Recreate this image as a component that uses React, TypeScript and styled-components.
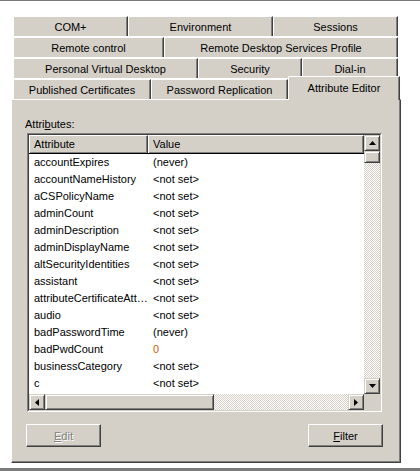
import styled, { createGlobalStyle } from "styled-components";

const GlobalStyle = createGlobalStyle`
  html, body {
    margin: 0;
    padding: 0;
    background: #fff;
  }
  body {
    font-family: "Liberation Sans", Arial, sans-serif;
    font-size: 11px;
    color: #000;
  }
`;

const Window = styled.div`
  width: 420px;
  height: 471px;
  box-sizing: border-box;
  border-top: 1px solid #7a7a7a;
  border-bottom: 3px solid #7a7a7a;
  padding: 15px 0 0 11px;
  display: flex;
  flex-direction: column;
`;

const TabStrip = styled.div`
  margin-left: 2px;
  width: 385px;
  display: flex;
  flex-direction: column;
  gap: 1px;
`;

const TabRow = styled.div`
  display: flex;
  height: 20px;
`;

const Tab = styled.div<{ $w: number; $active?: boolean }>`
  flex: 0 0 ${(p) => p.$w}px;
  box-sizing: border-box;
  height: ${(p) => (p.$active ? 24 : 20)}px;
  margin-top: ${(p) => (p.$active ? -3 : 0)}px;
  background: #d4d0c8;
  border-top: 1px solid #fff;
  border-left: 1px solid #fff;
  border-right: 1px solid #404040;
  box-shadow: inset -1px 0 #808080;
  border-top-left-radius: 2px;
  display: flex;
  align-items: center;
  justify-content: center;
  white-space: nowrap;
  position: ${(p) => (p.$active ? "relative" : "static")};
  z-index: ${(p) => (p.$active ? 1 : "auto")};
  padding-bottom: ${(p) => (p.$active ? 2 : 0)}px;
`;

const Panel = styled.div`
  width: 390px;
  height: 364px;
  box-sizing: border-box;
  background: #d4d0c8;
  border-top: 1px solid #fff;
  border-left: 1px solid #fff;
  border-right: 1px solid #404040;
  border-bottom: 1px solid #404040;
  box-shadow: inset -1px -1px #808080;
  padding: 17px 0 0 13px;
  display: flex;
  flex-direction: column;
`;

const Label = styled.div`
  height: 14px;
  line-height: 14px;
  margin-bottom: 2px;
  u {
    text-decoration: underline;
  }
`;

const ListOuter = styled.div`
  margin-left: 2px;
  width: 355px;
  height: 279px;
  box-sizing: border-box;
  border: 1px solid;
  border-color: #808080 #fff #fff #808080;
`;

const ListInner = styled.div`
  height: 100%;
  box-sizing: border-box;
  border: 1px solid;
  border-color: #404040 #d4d0c8 #d4d0c8 #404040;
  display: grid;
  grid-template-columns: 1fr 16px;
  grid-template-rows: 1fr 16px;
  background: #fff;
`;

const Content = styled.div`
  overflow: hidden;
  background: #fff;
`;

const HeaderRow = styled.div`
  display: flex;
  height: 18px;
  border-bottom: 1px solid #000;
`;

const HeaderCell = styled.div<{ $w?: number }>`
  ${(p) => (p.$w ? `flex: 0 0 ${p.$w}px;` : "flex: 1;")}
  box-sizing: border-box;
  background: #d4d0c8;
  border-top: 1px solid #fff;
  border-left: 1px solid #fff;
  border-right: 1px solid #404040;
  box-shadow: inset -1px -1px #808080;
  padding-left: 4px;
  line-height: 16px;
`;

const Row = styled.div`
  display: flex;
  height: 17px;
  line-height: 17px;
`;

const Cell = styled.div<{ $w?: number; $accent?: boolean }>`
  ${(p) => (p.$w ? `flex: 0 0 ${p.$w}px;` : "flex: 1;")}
  box-sizing: border-box;
  padding-left: 5px;
  padding-right: 0;
  white-space: nowrap;
  overflow: hidden;
  text-overflow: ellipsis;
  color: ${(p) => (p.$accent ? "#d06000" : "#000")};
`;

const ScrollBar = styled.div<{ $vertical?: boolean }>`
  display: flex;
  flex-direction: ${(p) => (p.$vertical ? "column" : "row")};
  background-color: #fff;
  background-image: repeating-conic-gradient(#d4d0c8 0 25%, #fff 0 50%);
  background-size: 2px 2px;
`;

const ScrollPart = styled.div<{ $size: number }>`
  flex: 0 0 ${(p) => p.$size}px;
  box-sizing: border-box;
  background: #d4d0c8;
  border: 1px solid;
  border-color: #d4d0c8 #404040 #404040 #d4d0c8;
  box-shadow: inset 1px 1px #fff, inset -1px -1px #808080;
  display: flex;
  align-items: center;
  justify-content: center;
`;

const Track = styled.div`
  flex: 1;
`;

const Corner = styled.div`
  background: #d4d0c8;
`;

const ButtonRow = styled.div`
  margin: 12px 0 0 1px;
  width: 357px;
  display: flex;
  justify-content: space-between;
`;

const Button = styled.div<{ $disabled?: boolean }>`
  width: 75px;
  height: 23px;
  box-sizing: border-box;
  border: 1px solid;
  border-color: #fff #404040 #404040 #fff;
  box-shadow: inset -1px -1px #808080;
  display: flex;
  align-items: center;
  justify-content: center;
  color: ${(p) => (p.$disabled ? "#808080" : "#000")};
  text-shadow: ${(p) => (p.$disabled ? "1px 1px #fff" : "none")};
  u {
    text-decoration: underline;
  }
`;

function Arrow({ dir }: { dir: "up" | "down" | "left" | "right" }) {
  const pts = {
    up: "0,4 7,4 3.5,0",
    down: "0,0 7,0 3.5,4",
    left: "4,0 4,7 0,3.5",
    right: "0,0 0,7 4,3.5",
  }[dir];
  const vertical = dir === "up" || dir === "down";
  return (
    <svg width={vertical ? 7 : 4} height={vertical ? 4 : 7} viewBox={vertical ? "0 0 7 4" : "0 0 4 7"}>
      <polygon points={pts} fill="#000" />
    </svg>
  );
}

const tabRows = [
  [
    { label: "COM+", w: 115 },
    { label: "Environment", w: 145 },
    { label: "Sessions", w: 125 },
  ],
  [
    { label: "Remote control", w: 151 },
    { label: "Remote Desktop Services Profile", w: 234 },
  ],
  [
    { label: "Personal Virtual Desktop", w: 185 },
    { label: "Security", w: 104 },
    { label: "Dial-in", w: 96 },
  ],
  [
    { label: "Published Certificates", w: 138 },
    { label: "Password Replication", w: 137 },
    { label: "Attribute Editor", w: 112, active: true },
  ],
];

const attributes = [
  ["accountExpires", "(never)"],
  ["accountNameHistory", "<not set>"],
  ["aCSPolicyName", "<not set>"],
  ["adminCount", "<not set>"],
  ["adminDescription", "<not set>"],
  ["adminDisplayName", "<not set>"],
  ["altSecurityIdentities", "<not set>"],
  ["assistant", "<not set>"],
  ["attributeCertificateAttribute", "<not set>"],
  ["audio", "<not set>"],
  ["badPasswordTime", "(never)"],
  ["badPwdCount", "0"],
  ["businessCategory", "<not set>"],
  ["c", "<not set>"],
  ["carLicense", "<not set>"],
];

export default function App() {
  return (
    <>
      <GlobalStyle />
      <Window>
        <TabStrip>
          {tabRows.map((row, i) => (
            <TabRow key={i}>
              {row.map((t) => (
                <Tab key={t.label} $w={t.w} $active={"active" in t && t.active}>
                  {t.label}
                </Tab>
              ))}
            </TabRow>
          ))}
        </TabStrip>
        <Panel>
          <Label>
            Attri<u>b</u>utes:
          </Label>
          <ListOuter>
            <ListInner>
              <Content>
                <HeaderRow>
                  <HeaderCell $w={119}>Attribute</HeaderCell>
                  <HeaderCell>Value</HeaderCell>
                </HeaderRow>
                {attributes.map(([name, value]) => (
                  <Row key={name}>
                    <Cell $w={119}>{name}</Cell>
                    <Cell $accent={value === "0"}>{value}</Cell>
                  </Row>
                ))}
              </Content>
              <ScrollBar $vertical>
                <ScrollPart $size={16}>
                  <Arrow dir="up" />
                </ScrollPart>
                <ScrollPart $size={12} />
                <Track />
                <ScrollPart $size={16}>
                  <Arrow dir="down" />
                </ScrollPart>
              </ScrollBar>
              <ScrollBar>
                <ScrollPart $size={16}>
                  <Arrow dir="left" />
                </ScrollPart>
                <ScrollPart $size={169} />
                <Track />
                <ScrollPart $size={16}>
                  <Arrow dir="right" />
                </ScrollPart>
              </ScrollBar>
              <Corner />
            </ListInner>
          </ListOuter>
          <ButtonRow>
            <Button $disabled>
              <span>
                <u>E</u>dit
              </span>
            </Button>
            <Button>
              <span>
                <u>F</u>ilter
              </span>
            </Button>
          </ButtonRow>
        </Panel>
      </Window>
    </>
  );
}
